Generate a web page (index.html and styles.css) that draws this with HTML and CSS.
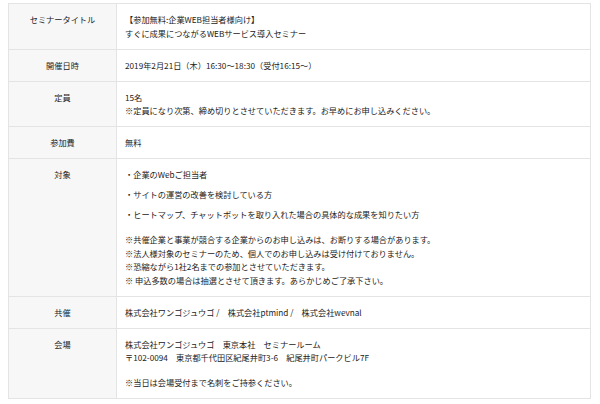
FILE: index.html
```html
<!DOCTYPE html>
<html lang="ja">
<head>
<meta charset="utf-8">
<link rel="stylesheet" href="styles.css">
</head>
<body>
<table class="info">
  <tr>
    <th>セミナータイトル</th>
    <td>【参加無料:企業WEB担当者様向け】<br>すぐに成果につながるWEBサービス導入セミナー</td>
  </tr>
  <tr>
    <th>開催日時</th>
    <td>2019年2月21日（木）16:30～18:30（受付16:15～）</td>
  </tr>
  <tr>
    <th>定員</th>
    <td>15名<br>※定員になり次第、締め切りとさせていただきます。お早めにお申し込みください。</td>
  </tr>
  <tr>
    <th>参加費</th>
    <td>無料</td>
  </tr>
  <tr>
    <th>対象</th>
    <td>
      <ul class="targets">
        <li>・企業のWebご担当者</li>
        <li>・サイトの運営の改善を検討している方</li>
        <li>・ヒートマップ、チャットボットを取り入れた場合の具体的な成果を知りたい方</li>
      </ul>
      <p class="note">※共催企業と事業が競合する企業からのお申し込みは、お断りする場合があります。<br>※法人様対象のセミナーのため、個人でのお申し込みは受け付けておりません。<br>※恐縮ながら1社2名までの参加とさせていただきます。<br>※ 申込多数の場合は抽選とさせて頂きます。あらかじめご了承下さい。</p>
    </td>
  </tr>
  <tr>
    <th>共催</th>
    <td>株式会社ワンゴジュウゴ /　株式会社ptmind /　株式会社wevnal</td>
  </tr>
  <tr>
    <th>会場</th>
    <td>
      <p>株式会社ワンゴジュウゴ　東京本社　セミナールーム<br>〒102-0094　東京都千代田区紀尾井町3-6　紀尾井町パークビル7F</p>
      <p class="note">※当日は会場受付まで名刺をご持参ください。</p>
    </td>
  </tr>
</table>
</body>
</html>
```
FILE: styles.css
```css
html, body {
  margin: 0;
  padding: 0;
  background: #fff;
}
body {
  padding: 3px 0 0 8px;
  font-family: "Noto Sans CJK JP", "Noto Sans", sans-serif;
  font-size: 8.2px;
  line-height: 13.5px;
  color: #222;
}
.info {
  width: 583px;
  border-collapse: collapse;
  border: 1px solid #e4e4e4;
}
.info th,
.info td {
  border-top: 1px solid #e4e4e4;
  padding: 9px 8px 8.5px 8px;
  vertical-align: top;
  text-align: left;
  font-weight: normal;
}
.info th {
  width: 91px;
  background: #f7f7f7;
  text-align: center;
  border-right: 1px solid #e4e4e4;
}
.info p {
  margin: 0;
}
.targets {
  list-style: none;
  margin: 0;
  padding: 0;
}
.targets li + li {
  margin-top: 6.5px;
}
.note {
  margin-top: 11.5px !important;
}
```
